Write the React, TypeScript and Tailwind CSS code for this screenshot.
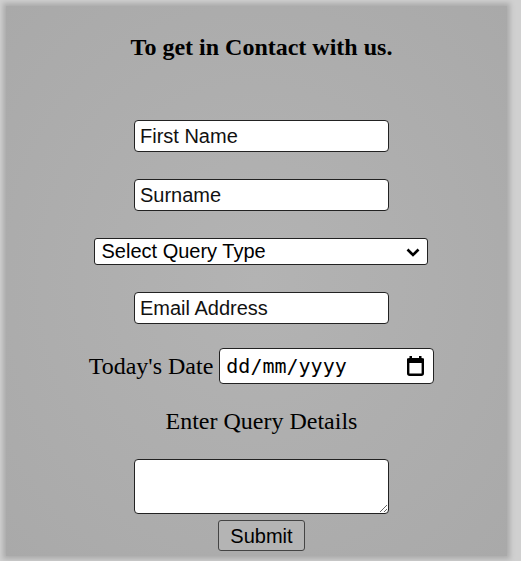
import { useState } from "react";

function App() {
  const [firstName, setFirstName] = useState("");
  const [surname, setSurname] = useState("");
  const [queryType, setQueryType] = useState("");
  const [email, setEmail] = useState("");
  const [date, setDate] = useState("");
  const [details, setDetails] = useState("");

  const inputCls =
    "w-[255px] h-[32px] px-[5px] bg-white border border-[#222] rounded-[4px] text-[20px] text-black placeholder:text-[#111] font-['Liberation_Sans',Arial,sans-serif] outline-none";

  return (
    <div className="w-[521px] h-[561px] bg-[#d0d0d0] p-[6px] overflow-hidden">
      <div className="h-[550px] w-[501px] bg-[radial-gradient(ellipse_at_center,#b3b3b3,#a9a9a9)] shadow-[0_0_5px_3px_#ababab] flex flex-col items-center font-['Liberation_Serif','Times_New_Roman',serif] text-black">
        <div className="ml-[10px] flex flex-col items-center">
          <h1 className="mt-[25px] text-[24px] font-bold leading-[32px]">
            To get in Contact with us.
          </h1>

          <form className="flex flex-col items-center mt-[57px]">
            <input
              value={firstName}
              onChange={(e) => setFirstName(e.target.value)}
              placeholder="First Name"
              className={inputCls}
            />
            <input
              value={surname}
              onChange={(e) => setSurname(e.target.value)}
              placeholder="Surname"
              className={inputCls + " mt-[27px]"}
            />
            <div className="relative mt-[27px]">
              <select
                value={queryType}
                onChange={(e) => setQueryType(e.target.value)}
                className="appearance-none w-[334px] h-[27px] pl-[6px] bg-white border border-[#222] rounded-[3px] text-[20px] leading-[25px] font-['Liberation_Sans',Arial,sans-serif] outline-none"
              >
                <option value="">Select Query Type</option>
                <option value="general">General</option>
                <option value="support">Support</option>
              </select>
              <svg
                className="absolute right-[8px] top-[10px] pointer-events-none"
                width="14"
                height="9"
                viewBox="0 0 14 9"
              >
                <path d="M1.5 1.5 L7 7 L12.5 1.5" fill="none" stroke="#000" strokeWidth="2.6" />
              </svg>
            </div>
            <input
              value={email}
              onChange={(e) => setEmail(e.target.value)}
              placeholder="Email Address"
              className={inputCls + " mt-[27px]"}
            />

            <div className="mt-[24px] flex items-center gap-[6px]">
              <label className="text-[24px] leading-[30px]">Today's Date</label>
              <div className="w-[215px] h-[36px] pl-[6px] pr-[8px] bg-white border border-[#222] rounded-[4px] flex items-center">
                <input
                  value={date}
                  onChange={(e) => setDate(e.target.value)}
                  placeholder="dd/mm/yyyy"
                  className="flex-1 min-w-0 text-[20px] font-['DejaVu_Sans_Mono',monospace] placeholder:text-black outline-none"
                />
                <svg width="19" height="20" viewBox="0 0 19 20">
                  <rect x="3.5" y="0" width="2.5" height="4" fill="#000" />
                  <rect x="13" y="0" width="2.5" height="4" fill="#000" />
                  <rect x="1" y="2.5" width="17" height="4.5" fill="#000" />
                  <rect x="2.2" y="3.2" width="14.6" height="15.6" fill="none" stroke="#000" strokeWidth="2.4" rx="1.5" />
                </svg>
              </div>
            </div>

            <p className="mt-[22px] text-[24px] leading-[30px]">Enter Query Details</p>

            <textarea
              value={details}
              onChange={(e) => setDetails(e.target.value)}
              className="mt-[23px] w-[255px] h-[55px] bg-white border border-[#222] rounded-[4px] text-[16px]"
            />
            <button
              type="button"
              className="mt-[6px] w-[87px] h-[31px] bg-[#b4b4b4] border border-[#444] rounded-[3px] text-[20px] font-['Liberation_Sans',Arial,sans-serif]"
            >
              Submit
            </button>
          </form>
        </div>
      </div>
    </div>
  );
}

export default App;
